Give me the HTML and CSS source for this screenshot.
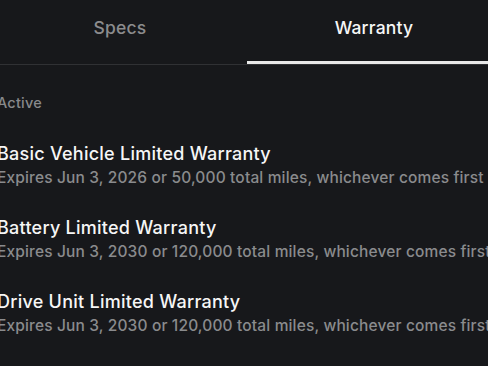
FILE: index.html
```html
<!DOCTYPE html>
<html>
<head>
<meta charset="utf-8">
<link rel="stylesheet" href="styles.css">
</head>
<body>
<div class="page">
  <nav class="tabs">
    <div class="tab">Specs</div>
    <div class="tab tab-active">Warranty</div>
  </nav>
  <section class="warranty">
    <div class="group-label">Active</div>
    <div class="item">
      <div class="item-title">Basic Vehicle Limited Warranty</div>
      <div class="item-sub">Expires Jun 3, 2026 or 50,000 total miles, whichever comes first</div>
    </div>
    <div class="item">
      <div class="item-title">Battery Limited Warranty</div>
      <div class="item-sub">Expires Jun 3, 2030 or 120,000 total miles, whichever comes first</div>
    </div>
    <div class="item">
      <div class="item-title">Drive Unit Limited Warranty</div>
      <div class="item-sub">Expires Jun 3, 2030 or 120,000 total miles, whichever comes first</div>
    </div>
  </section>
</div>
</body>
</html>
```
FILE: styles.css
```css
html, body {
  margin: 0;
  padding: 0;
  background: #17181b;
  overflow: hidden;
}
body {
  width: 488px;
  height: 366px;
  font-family: Inter, "Noto Sans", sans-serif;
  color: #f4f4f4;
}
.page {
  width: 508px;
  margin-left: -7px;
}
.tabs {
  display: flex;
  height: 64px;
  border-bottom: 1px solid #303134;
}
.tab {
  flex: 1;
  display: flex;
  justify-content: center;
  padding-top: 17px;
  font-size: 17.5px;
  font-weight: 500;
  color: #8c8c8e;
  letter-spacing: 0.2px;
  box-sizing: border-box;
}
.tab-active {
  color: #f6f6f6;
  border-bottom: 3px solid #e8e8e8;
}
.warranty {
  padding: 29px 0 0 4px;
  display: flex;
  flex-direction: column;
}
.group-label {
  font-size: 14.5px;
  font-weight: 500;
  color: #88898b;
  line-height: 18px;
  letter-spacing: 0.2px;
  margin-bottom: 31px;
}
.item {
  display: flex;
  flex-direction: column;
  gap: 3px;
  margin-bottom: 29px;
}
.item-title {
  font-size: 18px;
  font-weight: 500;
  line-height: 22px;
  letter-spacing: 0.25px;
  color: #f6f6f6;
}
.item-sub {
  font-size: 15.5px;
  font-weight: 500;
  line-height: 20px;
  letter-spacing: 0.15px;
  color: #8a8b8d;
  white-space: nowrap;
}
```
